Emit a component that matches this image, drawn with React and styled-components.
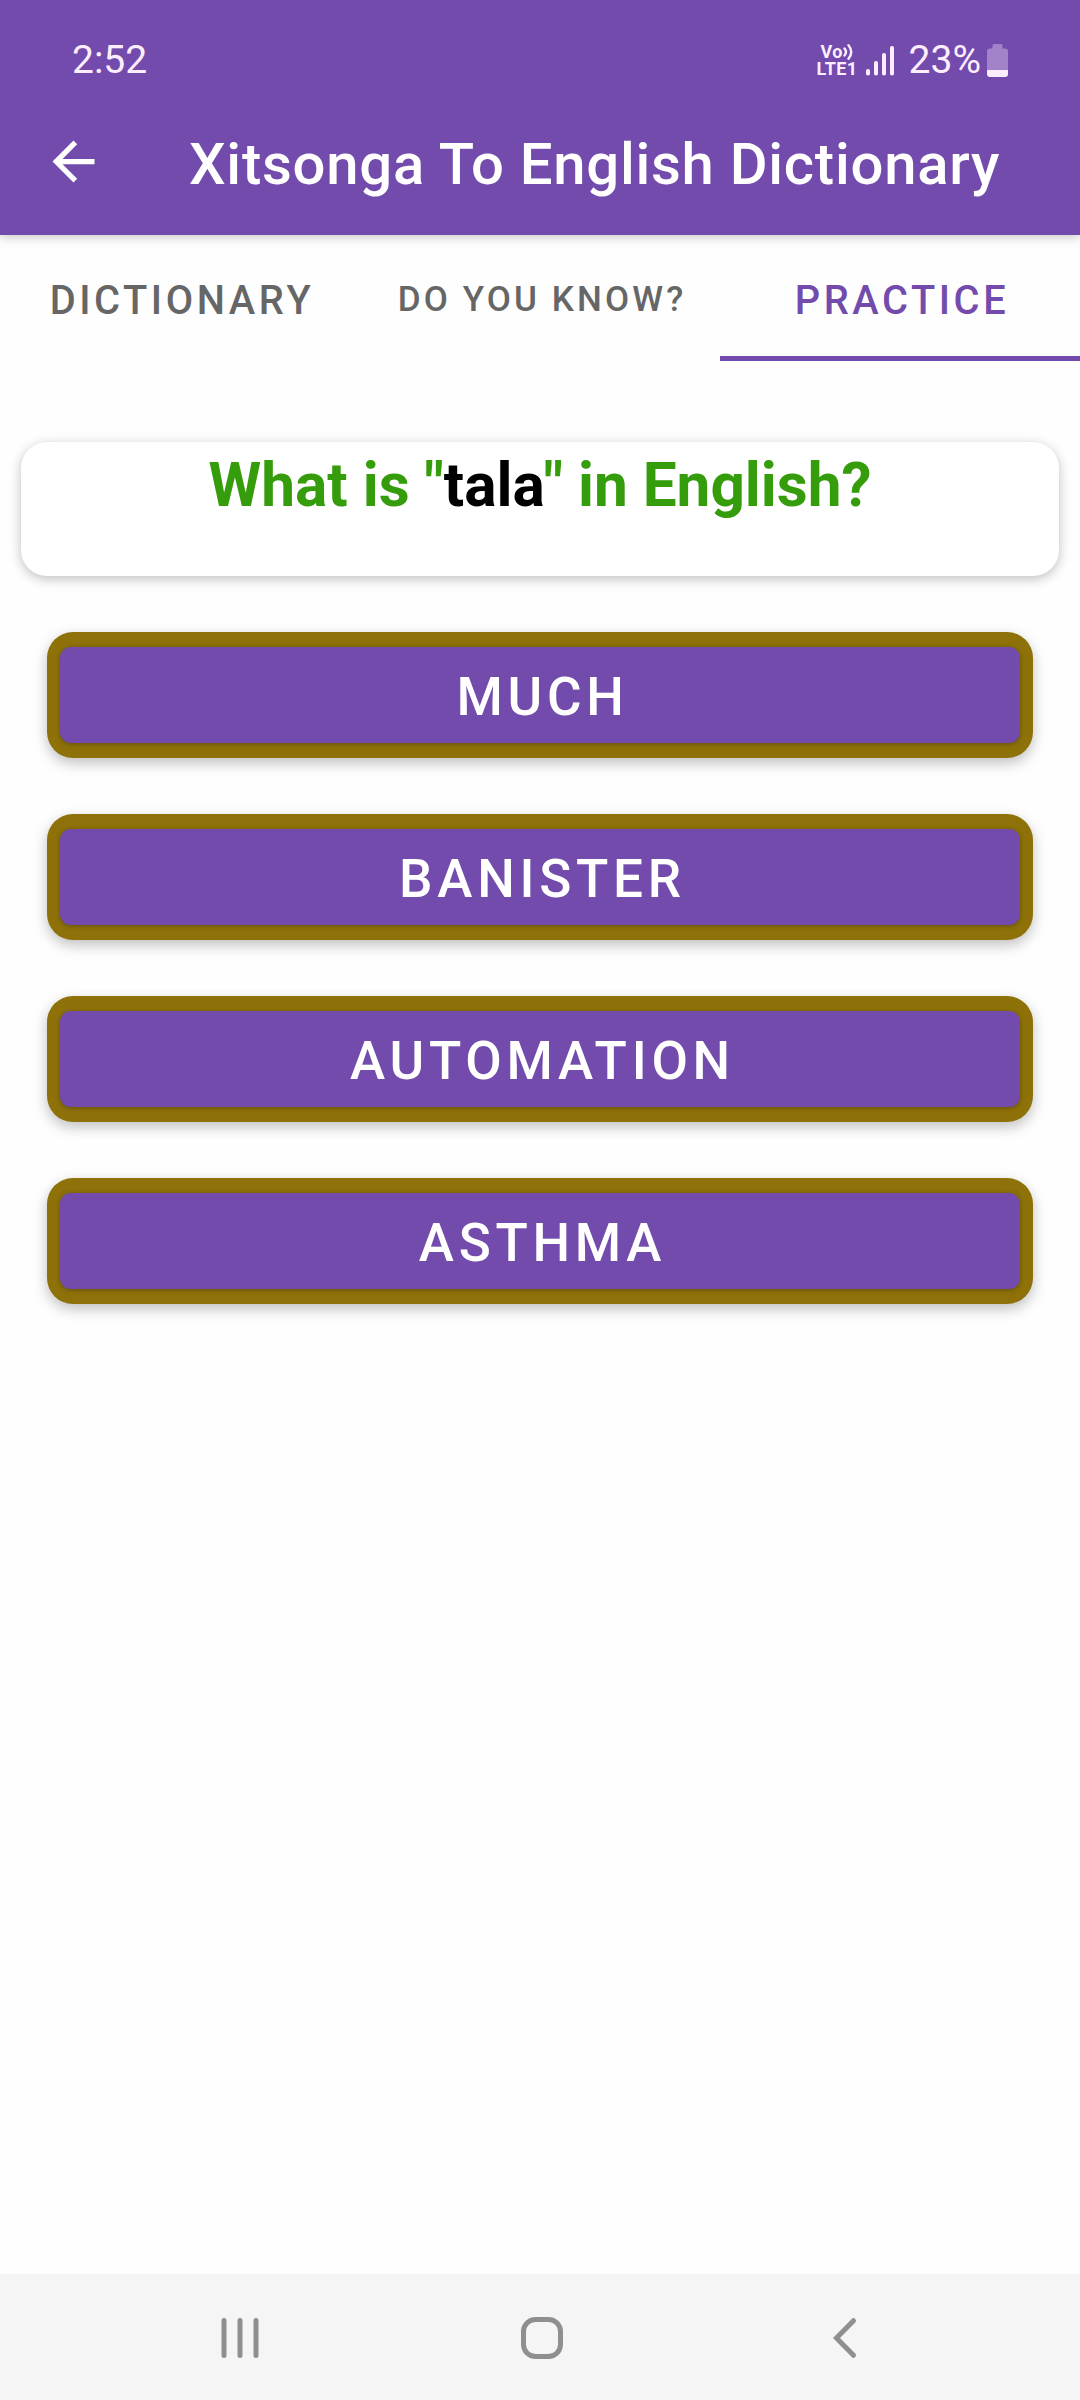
import React from "react";
import styled, { createGlobalStyle } from "styled-components";

const tabs = [
  { label: "Dictionary" },
  { label: "Do you know?", small: true },
  { label: "Practice", active: true },
];

const answers = ["Much", "Banister", "Automation", "Asthma"];

export default function App() {
  return (
    <>
      <GlobalStyle />
      <Screen>
        <Header>
          <StatusBar>
            <Clock>2:52</Clock>
            <StatusIcons>
              <Volte>
                <VolteRow>
                  Vo
                  <svg width="11" height="18" viewBox="0 0 11 18" fill="none">
                    <path
                      d="M1.500 5.500q3 3.500 0 7M5.500 2.200q5.500 6.800 0 13.600"
                      stroke="currentColor"
                      strokeWidth="2.4"
                      strokeLinecap="round"
                    />
                  </svg>
                </VolteRow>
                <VolteRow>LTE1</VolteRow>
              </Volte>
              <Signal width="28" height="30" viewBox="0 0 28 30">
                <rect x="0" y="23" width="4" height="6.500" rx="1.8" />
                <rect x="8" y="15" width="4" height="14.500" rx="1.8" />
                <rect x="16" y="7" width="4" height="22.500" rx="1.8" />
                <rect x="24" y="0" width="4" height="29.500" rx="1.8" />
              </Signal>
              <Percent>23%</Percent>
              <Battery width="21" height="33" viewBox="0 0 21 33">
                <path
                  d="M7 0h7q1.500 0 1.500 1.500V4.500H18q3 0 3 3V26H0V7.500q0-3 3-3h2.500V1.500Q5.500 0 7 0z"
                  fillOpacity="0.35"
                />
                <path d="M0 26h21v4q0 3-3 3H3q-3 0-3-3z" />
              </Battery>
            </StatusIcons>
          </StatusBar>
          <Toolbar>
            <BackButton aria-label="Back">
              <svg width="63" height="63" viewBox="0 0 24 24" fill="currentColor">
                <path d="M20 11H7.830l5.590-5.590L12 4l-8 8 8 8 1.410-1.410L7.830 13H20v-2z" />
              </svg>
            </BackButton>
            <Title>Xitsonga To English Dictionary</Title>
          </Toolbar>
        </Header>

        <TabBar>
          {tabs.map((tab) => (
            <Tab key={tab.label} $active={tab.active} $small={tab.small}>
              {tab.label}
            </Tab>
          ))}
        </TabBar>

        <Content>
          <QuestionCard>
            What is "<Word>tala</Word>" in English?
          </QuestionCard>
          <AnswerList>
            {answers.map((answer) => (
              <AnswerFrame key={answer}>
                <AnswerButton>{answer}</AnswerButton>
              </AnswerFrame>
            ))}
          </AnswerList>
        </Content>

        <NavBar>
          <NavButton aria-label="Recents">
            <svg width="44" height="44" viewBox="0 0 44 44">
              <path d="M6 4.500v35M22 4.500v35M38 4.500v35" />
            </svg>
          </NavButton>
          <NavButton aria-label="Home">
            <svg width="44" height="44" viewBox="0 0 44 44">
              <rect x="3.500" y="3.500" width="37" height="37" rx="12" />
            </svg>
          </NavButton>
          <NavButton aria-label="Back">
            <svg width="44" height="44" viewBox="0 0 44 44">
              <path d="M31.500 4.700L14.500 22l17 17.300" strokeLinejoin="miter" />
            </svg>
          </NavButton>
        </NavBar>
      </Screen>
    </>
  );
}

const GlobalStyle = createGlobalStyle`
  * {
    box-sizing: border-box;
  }
  body {
    margin: 0;
    background: #fefefe;
    font-family: Roboto, sans-serif;
  }
  button {
    border: 0;
    padding: 0;
    background: none;
    color: inherit;
    font-family: inherit;
  }
`;

const Screen = styled.div`
  width: 1080px;
  height: 2400px;
  display: flex;
  flex-direction: column;
  overflow: hidden;
  background: #fefefe;
`;

const Header = styled.header`
  position: relative;
  height: 235px;
  background: #724bac;
  color: #fff;
  box-shadow: 0 2px 10px rgba(0, 0, 0, 0.22);
`;

const StatusBar = styled.div`
  height: 88px;
  display: flex;
  justify-content: space-between;
  padding: 0 72px;
  color: #fdeeff;
`;

const Clock = styled.span`
  padding-top: 37px;
  font-size: 39px;
  line-height: 46px;
`;

const StatusIcons = styled.div`
  display: flex;
  align-items: flex-start;
`;

const Volte = styled.div`
  width: 41px;
  margin: 43px 8px 0 0;
  font-size: 18px;
  font-weight: 700;
  letter-spacing: 0.4px;
`;

const VolteRow = styled.div`
  display: flex;
  justify-content: center;
  align-items: center;
  height: 17px;
  line-height: 17px;
`;

const Signal = styled.svg`
  margin: 46px 15px 0 0;
  fill: currentColor;
`;

const Percent = styled.span`
  margin: 37px 6px 0 0;
  font-size: 39px;
  line-height: 46px;
`;

const Battery = styled.svg`
  margin-top: 44px;
  fill: currentColor;
`;

const Toolbar = styled.div`
  height: 147px;
  display: flex;
  align-items: center;
  padding-left: 42px;
`;

const BackButton = styled.button`
  width: 63px;
  height: 63px;
  svg {
    display: block;
  }
`;

const Title = styled.h1`
  margin: 4px 0 0 84px;
  font-size: 58px;
  font-weight: 500;
  letter-spacing: 0.75px;
  line-height: 68px;
  white-space: nowrap;
`;

const TabBar = styled.nav`
  display: grid;
  grid-template-columns: repeat(3, 1fr);
  height: 126px;
`;

const Tab = styled.button`
  height: 126px;
  padding: ${(p) => (p.$small ? "7px 0 0 4px" : "10px 0 0 4px")};
  border-bottom: 5px solid ${(p) => (p.$active ? "#724bac" : "transparent")};
  color: ${(p) => (p.$active ? "#724bac" : "#666")};
  font-size: ${(p) => (p.$small ? "35px" : "39.8px")};
  font-weight: 500;
  letter-spacing: 0.0893em;
  text-transform: uppercase;
  white-space: nowrap;
`;

const Content = styled.main`
  flex: 1;
  padding: 81px 21px 0;
`;

const QuestionCard = styled.div`
  height: 134px;
  padding-top: 8px;
  border-radius: 26px;
  background: #fff;
  box-shadow: 0 3px 12px rgba(0, 0, 0, 0.25);
  color: #359d0b;
  font-size: 60.3px;
  font-weight: 700;
  line-height: 71px;
  text-align: center;
`;

const Word = styled.span`
  color: #000;
`;

const AnswerList = styled.div`
  display: flex;
  flex-direction: column;
  gap: 56px;
  padding: 56px 26px 0;
`;

const AnswerFrame = styled.div`
  height: 126px;
  padding: 15px 13px;
  border-radius: 26px;
  background: #8e7108;
  box-shadow: 0 5px 14px rgba(0, 0, 0, 0.25);
`;

const AnswerButton = styled.button`
  display: block;
  width: 100%;
  height: 96px;
  padding: 3px 0 0 5px;
  border-radius: 11px;
  background: #724bac;
  box-shadow: 0 1px 4px rgba(60, 50, 20, 0.5);
  color: #fff;
  font-size: 53px;
  font-weight: 500;
  letter-spacing: 0.0893em;
  text-transform: uppercase;
`;

const NavBar = styled.footer`
  display: flex;
  justify-content: center;
  gap: 258px;
  height: 126px;
  padding: 42px 0 0 4px;
  background: #f5f5f5;
`;

const NavButton = styled.button`
  width: 44px;
  height: 44px;
  svg {
    display: block;
    fill: none;
    stroke: #8f8f8f;
    stroke-width: 5;
    stroke-linecap: round;
  }
`;
